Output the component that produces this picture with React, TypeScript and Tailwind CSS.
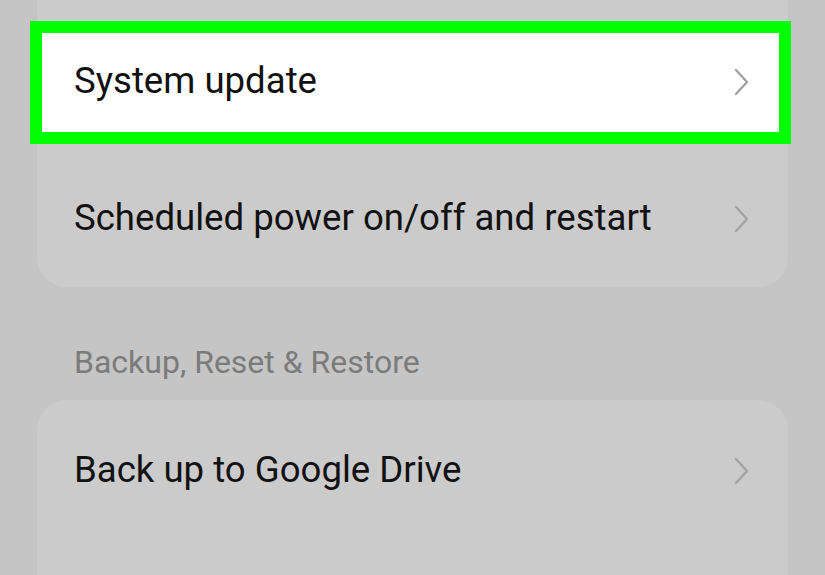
import React from "react";

const Chevron: React.FC = () => (
  <svg width="18" height="30" viewBox="0 0 18 30" fill="none" className="shrink-0">
    <polyline points="4,3 15,15 4,27" stroke="#a2a2a2" strokeWidth="2.4" strokeLinecap="round" strokeLinejoin="round" />
  </svg>
);

const Row: React.FC<{ label: string; highlight?: boolean }> = ({ label, highlight }) => (
  <div className="relative h-[137px] flex items-center pl-[37px] pr-[38px]">
    {highlight && (
      <div className="absolute left-[-7px] right-[-3px] top-[8px] bottom-[6px] border-[12px] border-[#00ff00] bg-white" />
    )}
    <span className="relative flex-1 text-[36.6px] text-[#111111]">{label}</span>
    <span className="relative">
      <Chevron />
    </span>
  </div>
);

export default function App() {
  return (
    <div
      className="w-[825px] h-[575px] overflow-hidden bg-[#c5c5c5] px-[37px]"
      style={{ fontFamily: "Roboto, 'Noto Sans', sans-serif" }}
    >
      {/* Device group */}
      <div className="bg-[#cbcbcb] rounded-b-[30px] pt-[13px]">
        <Row label="System update" highlight />
        <Row label="Scheduled power on/off and restart" />
      </div>

      {/* Section header */}
      <div className="h-[113px] flex items-end pb-[14px] pl-[37px]">
        <span className="text-[32px] text-[#7b7b7b]">Backup, Reset &amp; Restore</span>
      </div>

      {/* Backup group */}
      <div className="bg-[#cbcbcb] rounded-[30px] pt-[2px]">
        <Row label="Back up to Google Drive" />
        <Row label="" />
      </div>
    </div>
  );
}
